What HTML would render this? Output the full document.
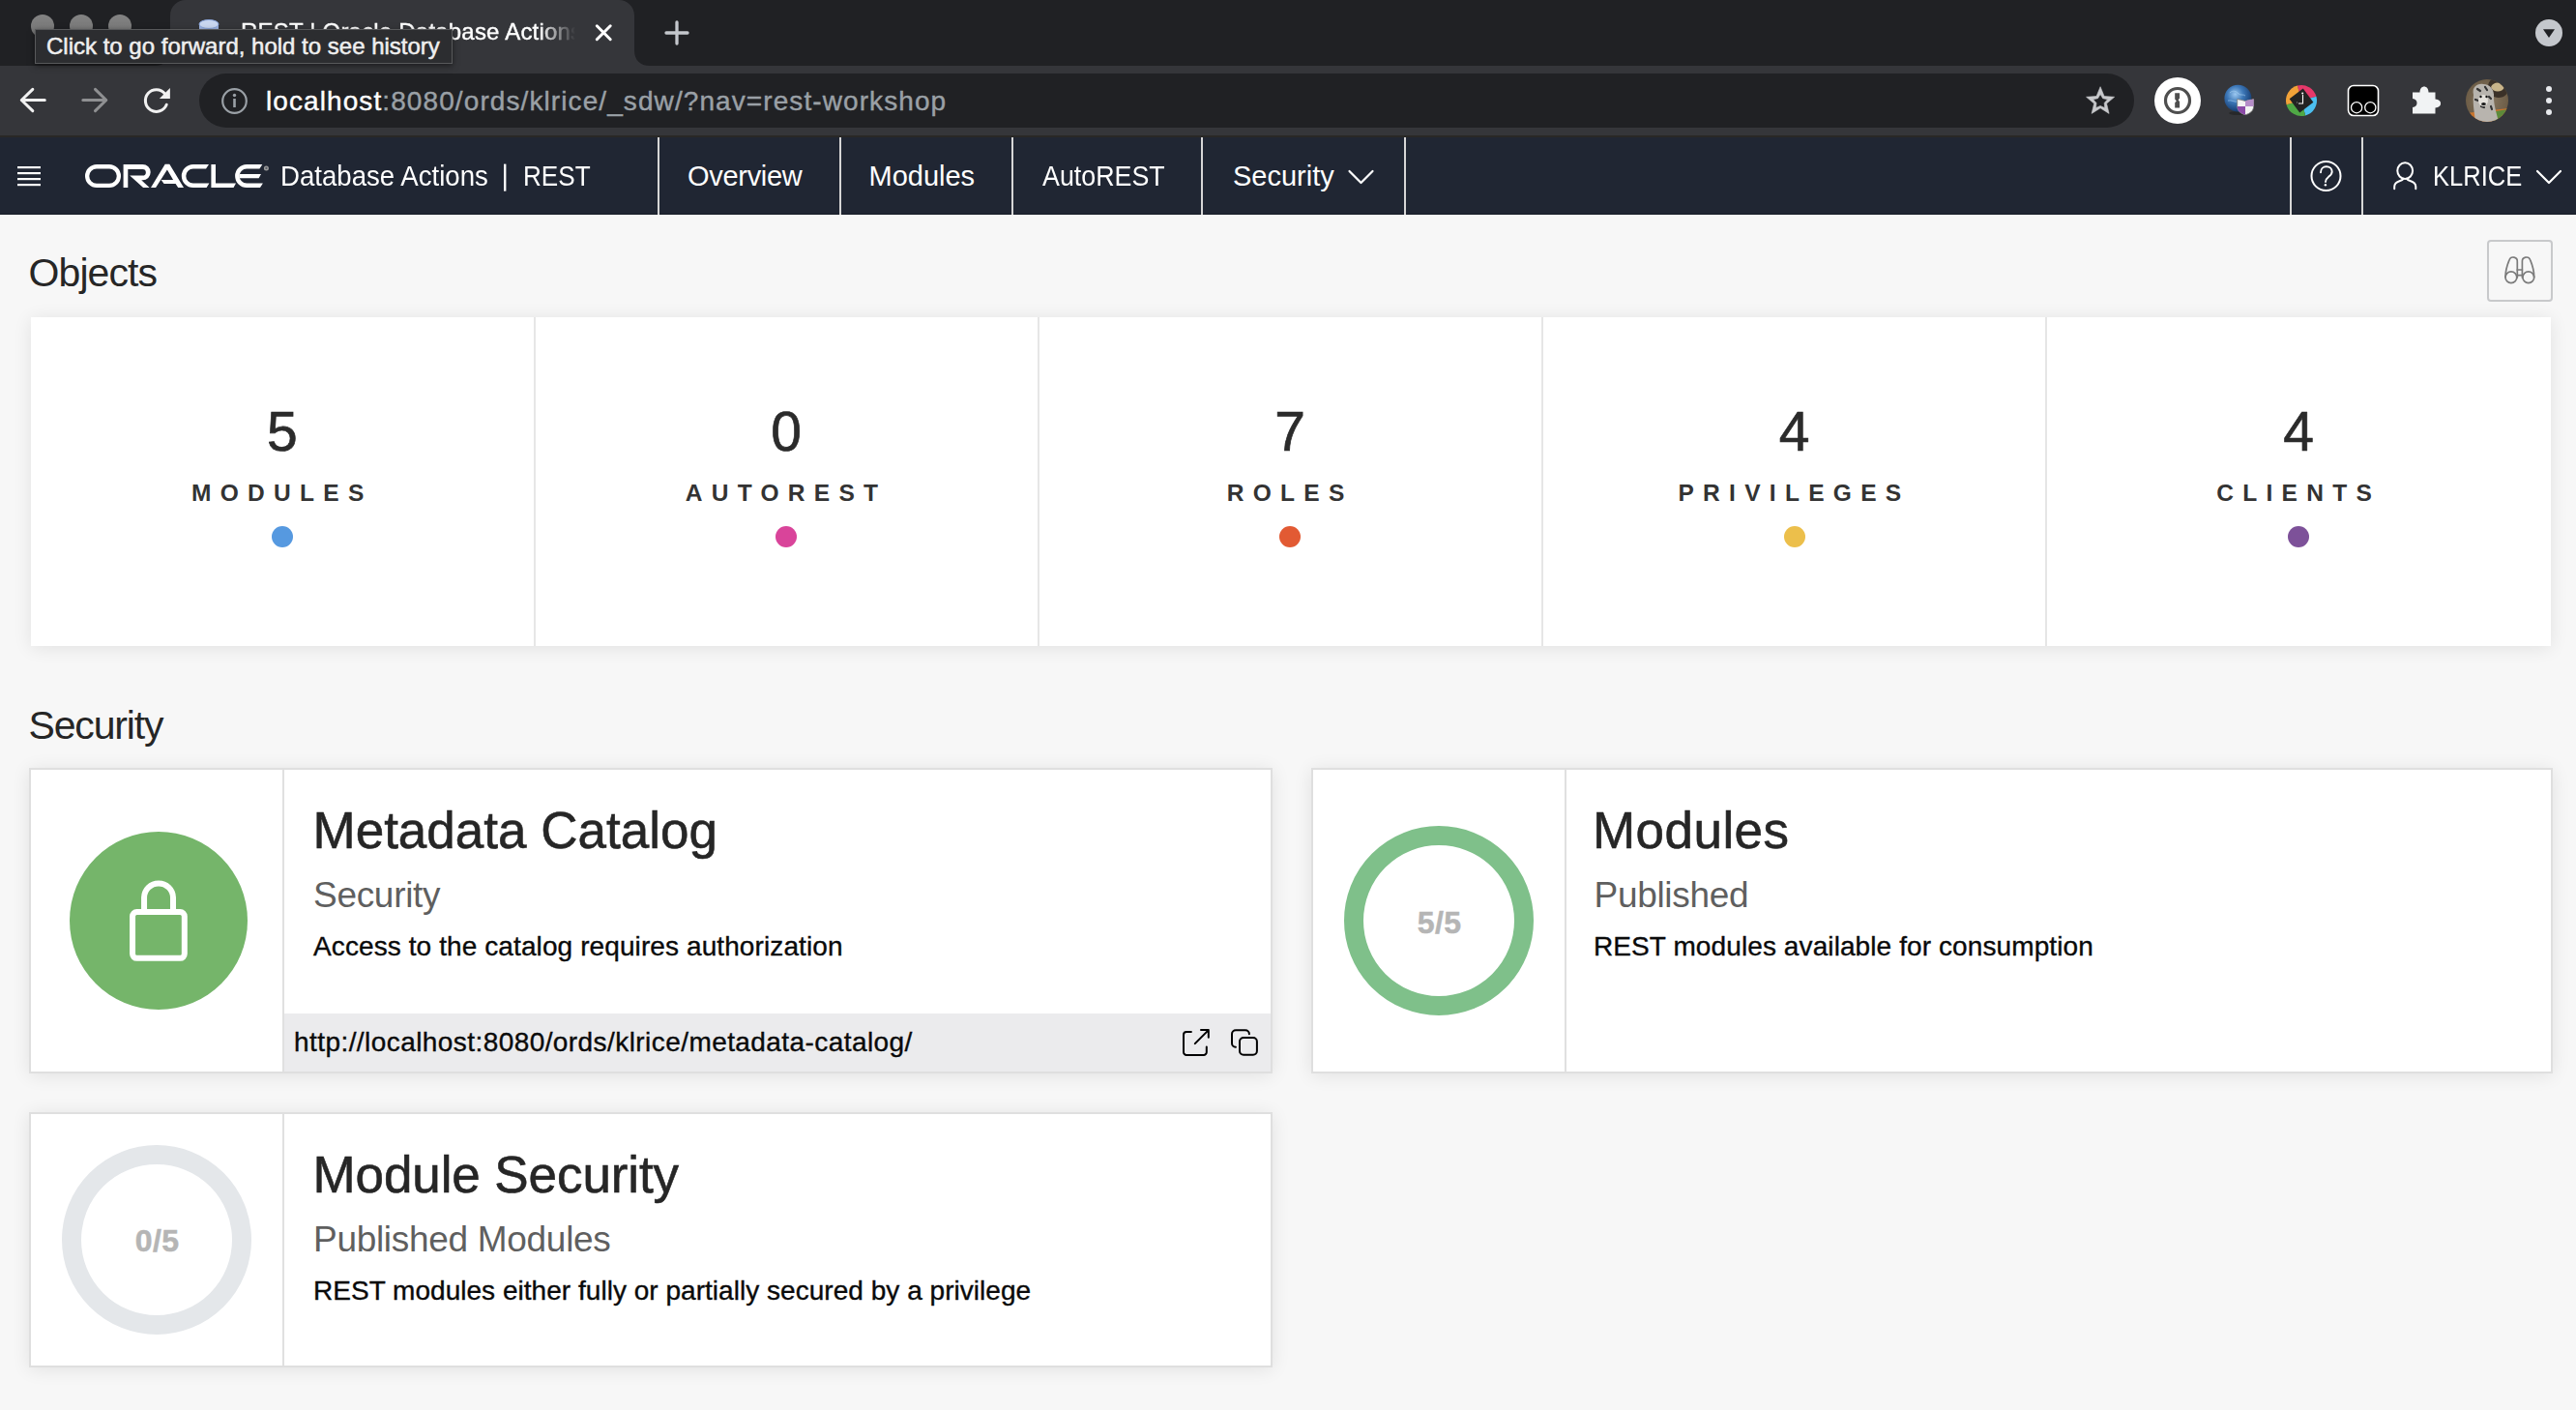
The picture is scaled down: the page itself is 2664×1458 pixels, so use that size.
<!DOCTYPE html>
<html>
<head>
<meta charset="utf-8">
<style>
*{box-sizing:border-box;margin:0;padding:0}
html,body{width:2664px;height:1458px;overflow:hidden;background:#f7f7f7;font-family:"Liberation Sans",sans-serif}
.a{position:absolute}
.t{position:absolute;white-space:nowrap;line-height:1}
#tabstrip{left:0;top:0;width:2664px;height:68px;background:#202124}
#toolbar{left:0;top:68px;width:2664px;height:74px;background:#35363a;border-bottom:2px solid #292826}
#hdr{left:0;top:142px;width:2664px;height:80px;background:#202633;border-bottom:1px solid #181d27}
.light{width:24px;height:24px;border-radius:50%;background:linear-gradient(#838383,#737373);top:14.8px}
.sep{position:absolute;top:142px;width:2px;height:80px;background:#d6d6d6}
.card{position:absolute;background:#fff;border:2px solid #dfdfdf;box-shadow:0 2px 18px rgba(0,0,0,.09)}
.num{top:418.3px;width:400px;text-align:center;font-size:57px;color:#2b2b2b;-webkit-text-stroke:.7px #2b2b2b}
.lbl{top:498px;width:400px;text-align:center;font-size:24.5px;font-weight:700;letter-spacing:9.3px;color:#333}
.dot{top:543.8px;width:22px;height:22px;border-radius:50%}
.ttl{font-size:53px;font-weight:400;-webkit-text-stroke:.6px #262626;letter-spacing:0;color:#262626}
.sub{font-size:37px;color:#5f5f5f;letter-spacing:-.3px}
.dsc{font-size:28px;color:#0a0a0a;letter-spacing:.1px;-webkit-text-stroke:.35px #0a0a0a}
.ring{width:196px;height:196px;border-radius:50%;border:20px solid #7fc08a}
.rt{width:100px;text-align:center;font-size:32px;font-weight:700;color:#b5b5b5;-webkit-text-stroke:.5px #b5b5b5;letter-spacing:.4px;text-indent:.4px}
.hd{top:167.6px;font-size:29px;color:#fff}
</style>
</head>
<body>
<!-- TAB STRIP -->
<div id="tabstrip" class="a"></div>
<div class="a light" style="left:32px"></div>
<div class="a light" style="left:72px"></div>
<div class="a light" style="left:112px"></div>
<svg class="a" style="left:0;top:0" width="2664" height="142" viewBox="0 0 2664 142">
  <path d="M160,68 C170,68 176,62 176,52 L176,16 C176,7 183,0 192,0 L640,0 C649,0 656,7 656,16 L656,52 C656,62 662,68 672,68 Z" fill="#35363a"/>
</svg>
<div class="t" id="tabtitle" style="left:249px;top:21.3px;font-size:24px;color:#fff;-webkit-text-stroke:.4px #fff;width:355px;overflow:hidden;-webkit-mask-image:linear-gradient(to right,#000 0,#000 308px,transparent 346px);letter-spacing:.2px">REST | Oracle Database Actions</div>
<svg class="a" style="left:0;top:0" width="2664" height="142" viewBox="0 0 2664 142">
  <!-- favicon -->
  <path d="M206,25 L206,41 C206,45 211,47 216,47 C221,47 226,45 226,41 L226,25 Z" fill="#9fb6e4"/>
  <ellipse cx="216" cy="25" rx="10" ry="4.5" fill="#c9d7f0" stroke="#8aa6dc" stroke-width="1"/>
  <!-- close x -->
  <path d="M617.3,26.8 L631.2,40.7 M631.2,26.8 L617.3,40.7" stroke="#ffffff" stroke-width="3" stroke-linecap="round"/>
  <!-- plus -->
  <path d="M700,23 L700,45 M689,34 L711,34" stroke="#c4c7cc" stroke-width="3.3" stroke-linecap="round"/>
  <!-- tab search -->
  <circle cx="2636" cy="34" r="14" fill="#c4c7cc"/>
  <path d="M2630,30.2 L2642,30.2 L2636,39 Z" fill="#202124"/>
</svg>

<!-- TOOLBAR -->
<div id="toolbar" class="a"></div>
<div class="a" style="left:206px;top:76px;width:2001px;height:56px;border-radius:28px;background:#202124"></div>
<div class="t" style="left:275px;top:90.6px;font-size:28px;letter-spacing:1.09px;color:#9aa0a6;-webkit-text-stroke:.4px #9aa0a6"><span style="color:#fff;-webkit-text-stroke:.4px #fff">localhost</span>:8080/ords/klrice/_sdw/?nav=rest-workshop</div>
<svg class="a" style="left:0;top:0" width="2664" height="142" viewBox="0 0 2664 142">
  <!-- back -->
  <path d="M22.3,103.5 L46.3,103.5 M33.8,92.4 L22.3,103.5 L33.8,114.6" fill="none" stroke="#f1f1f1" stroke-width="3" stroke-linecap="round" stroke-linejoin="round"/>
  <!-- forward -->
  <path d="M85.8,103.5 L109.8,103.5 M98.5,92.4 L109.8,103.5 L98.5,114.6" fill="none" stroke="#8f9092" stroke-width="3" stroke-linecap="round" stroke-linejoin="round"/>
  <!-- reload -->
  <path d="M172.2,108.2 A11.3,11.3 0 1 1 170.5,97" fill="none" stroke="#f1f1f1" stroke-width="3" stroke-linecap="round"/>
  <path d="M175.9,90.9 L175.9,101.9 L164.9,101.9 Z" fill="#f1f1f1"/>
  <!-- info -->
  <circle cx="242.5" cy="104.5" r="12.3" fill="none" stroke="#9aa0a6" stroke-width="2.2"/>
  <circle cx="242.5" cy="98.5" r="1.7" fill="#9aa0a6"/>
  <rect x="241.2" y="102" width="2.6" height="9" fill="#9aa0a6"/>
  <!-- star -->
  <path d="M2172.10,89.70 L2176.10,99.50 L2186.65,100.27 L2178.57,107.10 L2181.09,117.38 L2172.10,111.80 L2163.11,117.38 L2165.63,107.10 L2157.55,100.27 L2168.10,99.50 Z M2172.10,97.40 L2174.63,101.72 L2179.52,102.79 L2176.19,106.53 L2176.68,111.51 L2172.10,109.50 L2167.52,111.51 L2168.01,106.53 L2164.68,102.79 L2169.57,101.72 Z" fill="#c8c9cc" fill-rule="evenodd" stroke="#c8c9cc" stroke-width=".6" stroke-linejoin="round"/>
  <!-- 1password -->
  <circle cx="2252" cy="104" r="24" fill="#ffffff"/>
  <circle cx="2252" cy="104" r="12.5" fill="none" stroke="#4e4e4e" stroke-width="3.2"/>
  <path d="M2249.2,96.3 L2254.1,96.3 L2254.1,101.6 L2252.7,103.3 L2254.1,105.2 L2254.1,111.5 L2249.2,111.5 L2249.2,106.2 L2250.8,104.4 L2249.2,102.6 Z" fill="#4e4e4e"/>
  <!-- globe -->
  <defs>
    <radialGradient id="gl" cx="0.4" cy="0.35" r="0.75"><stop offset="0" stop-color="#9cc8f0"/><stop offset="0.4" stop-color="#3d78b8"/><stop offset="0.85" stop-color="#163d72"/><stop offset="1" stop-color="#0b2247"/></radialGradient>
    <radialGradient id="av" cx="0.5" cy="0.5" r="0.55"><stop offset="0" stop-color="#8a7a64"/><stop offset="1" stop-color="#6a5a44"/></radialGradient>
    <clipPath id="avc"><circle cx="2572" cy="104" r="22"/></clipPath>
  </defs>
  <ellipse cx="2315" cy="117" rx="10" ry="2" fill="#1a1a1a" opacity=".5"/>
  <circle cx="2314.4" cy="101.7" r="14" fill="url(#gl)"/>
  <path d="M2306,96 C2309,93 2313,94 2315,97 C2317,99 2320,97 2322,99 M2304,104 C2308,103 2311,106 2314,105" fill="none" stroke="#a9d0f2" stroke-width="1" opacity=".6"/>
  <path d="M2322,104.5 C2325,103.5 2328,103 2330.6,102.5 L2330.6,110 C2330.6,114.5 2327,117.5 2322,118.7 C2317,117.5 2313.7,114.5 2313.7,110 L2313.7,102.5 C2316.3,103 2319,103.5 2322,104.5 Z" fill="#f2f2f2" stroke="#777" stroke-width=".8"/>
  <path d="M2322,104.5 C2325,103.5 2328,103 2330.6,102.5 L2330.6,110 L2322,110 Z" fill="#b58dc8"/>
  <path d="M2322,110 L2313.7,110 C2313.7,114.5 2317,117.5 2322,118.7 Z" fill="#8a4aa6"/>
  <!-- colorful -->
  <g transform="translate(2380,104)">
    <path d="M0,-16 A16,16 0 0 1 16,0 L0,0 Z" fill="#e6386a" transform="rotate(-15)"/>
    <path d="M0,-16 A16,16 0 0 1 16,0 L0,0 Z" fill="#4cc0f0" transform="rotate(75)"/>
    <path d="M0,-16 A16,16 0 0 1 16,0 L0,0 Z" fill="#4fa845" transform="rotate(165)"/>
    <path d="M0,-16 A16,16 0 0 1 16,0 L0,0 Z" fill="#f2a238" transform="rotate(255)"/>
    <path d="M0,-12.5 L12.5,0 L0,12.5 L-12.5,0 Z" fill="#232323" transform="rotate(8)"/>
    <path d="M1.5,-6 L1.5,3 L-3,3 M-5,2 L-4.5,2" fill="none" stroke="#fff" stroke-width="1.1"/>
    <circle cx="1.2" cy="-7.5" r="1" fill="#fff"/>
  </g>
  <!-- black square ext -->
  <rect x="2428.5" y="88.5" width="31" height="31" rx="5.5" fill="#000" stroke="#fff" stroke-width="1.6"/>
  <circle cx="2437.1" cy="111.2" r="5.6" fill="none" stroke="#fff" stroke-width="1.3"/>
  <circle cx="2451.3" cy="111.2" r="5.6" fill="none" stroke="#fff" stroke-width="1.3"/>
  <!-- puzzle -->
  <path d="M2495,95.5 L2502.5,95.5 C2502.5,87.5 2511.5,87.5 2511.5,95.5 L2518.5,95.5 L2518.5,102.5 C2526,102.5 2526,111.5 2518.5,111.5 L2518.5,117.5 L2495,117.5 L2495,111 C2501,111 2501,102 2495,102 Z" fill="#f1f3f4"/>
  <!-- avatar -->
  <g clip-path="url(#avc)">
    <rect x="2550" y="82" width="44" height="44" fill="url(#av)"/>
    <circle cx="2584" cy="90" r="11" fill="#3b3128"/>
    <path d="M2576,90 C2578,84 2588,84 2590,90 C2588,96 2578,96 2576,90 Z" fill="#c9b58a"/>
    <path d="M2550,117 L2594,112 L2594,126 L2550,126 Z" fill="#c9752e"/>
    <path d="M2575,116 L2594,113 L2594,126 L2580,126 Z" fill="#5d8a3a"/>
    <path d="M2558,98 C2556,90 2562,86 2568,87 C2575,87 2580,93 2579,101 C2579,108 2581,114 2584,126 L2560,126 C2559,116 2557,108 2558,98 Z" fill="#b8b4ae"/>
    <path d="M2562,92 l3,2 M2570,90 l2,3 M2560,103 l3,1 M2574,100 l2,2 M2566,110 l3,1 M2576,110 l1,3" stroke="#333" stroke-width="2.2" stroke-linecap="round"/>
    <ellipse cx="2568" cy="104" rx="5" ry="6" fill="#e3e0da"/>
    <circle cx="2565.5" cy="100" r="1.2" fill="#111"/><circle cx="2571.5" cy="100" r="1.2" fill="#111"/>
    <ellipse cx="2568.5" cy="107.5" rx="2.4" ry="1.6" fill="#1a1a1a"/>
  </g>
  <!-- menu -->
  <circle cx="2636" cy="92" r="3" fill="#e8eaed"/><circle cx="2636" cy="104" r="3" fill="#e8eaed"/><circle cx="2636" cy="116" r="3" fill="#e8eaed"/>
</svg>

<!-- TOOLTIP -->
<div class="a" style="left:36px;top:30px;width:432px;height:36px;background:#2c2d30;border:1px solid #58595b;box-shadow:0 2px 6px rgba(0,0,0,.5)"></div>
<div class="t" style="left:48px;top:35.8px;font-size:24px;color:#efefef;-webkit-text-stroke:.5px #efefef">Click to go forward, hold to see history</div>

<!-- APP HEADER -->
<div id="hdr" class="a"></div>
<div class="sep" style="left:868px"></div>
<div class="sep" style="left:680px"></div>
<div class="sep" style="left:1046px"></div>
<div class="sep" style="left:1242px"></div>
<div class="sep" style="left:1452px"></div>
<div class="sep" style="left:2368px"></div>
<div class="sep" style="left:2442px"></div>
<svg class="a" style="left:0;top:0" width="2664" height="230" viewBox="0 0 2664 230">
  <!-- hamburger -->
  <rect x="18" y="172" width="24" height="2.2" fill="#fff"/><rect x="18" y="178" width="24" height="2.2" fill="#fff"/>
  <rect x="18" y="184" width="24" height="2.2" fill="#fff"/><rect x="18" y="190" width="24" height="2.2" fill="#fff"/>
  <!-- ORACLE -->
  <g fill="#fff" fill-rule="evenodd">
    <path d="M100.1,169.9 L112.9,169.9 A12.1,12.1 0 0 1 112.9,194.1 L100.1,194.1 A12.1,12.1 0 0 1 100.1,169.9 Z M99.9,174.4 A7.65,7.65 0 0 0 99.9,189.7 L113.1,189.7 A7.65,7.65 0 0 0 113.1,174.4 Z"/>
    <path d="M127.6,169.9 L147.5,169.9 A8.2,8.2 0 0 1 147.5,186.3 L146.2,186.3 L154.6,194.1 L148.1,194.1 L134.2,181.6 L147.5,181.6 A3.35,3.35 0 0 0 147.5,174.9 L132.3,174.9 L132.3,194.1 L127.6,194.1 Z"/>
    <path d="M170.7,169.8 L175.3,169.8 L190,194.1 L184.2,194.1 L181.6,190 L169.6,190 L166.6,185.9 L179.1,185.9 L172.9,175.6 L161.1,194.1 L156,194.1 Z"/>
    <path d="M216,170 L199.8,170 A12,12 0 0 0 199.8,194 L213.6,194 L216.4,189.5 L199.8,189.5 A7.5,7.5 0 0 1 199.8,174.5 L213,174.5 Z"/>
    <path d="M218.4,170 L223,170 L223,189.5 L244,189.5 L241.5,194 L218.4,194 Z"/>
    <path d="M271.3,170 L255.1,170 A12,12 0 0 0 255.1,194 L269,194 L271.9,189.5 L255.1,189.5 A7.5,7.5 0 0 1 255.1,174.5 L268.4,174.5 Z M247.8,179.9 L270,179.9 L267.6,184.2 L247.8,184.2 Z"/>
  </g>
  <circle cx="275.4" cy="173.9" r="2.5" fill="#9c9c9c"/><circle cx="275.4" cy="173.9" r="1.1" fill="#5a5f68"/>
  <!-- pipe -->
  <rect x="521" y="169.6" width="2.4" height="28" fill="#fff"/>
  <!-- security chevron -->
  <path d="M1395.5,177 L1407.5,189 L1419.5,177" fill="none" stroke="#fff" stroke-width="2.2" stroke-linecap="round" stroke-linejoin="round"/>
  <!-- help -->
  <circle cx="2405.5" cy="182" r="15" fill="none" stroke="#fff" stroke-width="2"/>
  <path d="M2400,178.2 C2400,174.6 2402.6,172.3 2405.8,172.3 C2409.2,172.3 2411.7,174.5 2411.7,177.6 C2411.7,180.4 2409.6,181.7 2408,182.9 C2406.2,184.3 2405,185.4 2405,188" fill="none" stroke="#fff" stroke-width="1.9" stroke-linecap="round"/>
  <circle cx="2404.9" cy="191.3" r="1.2" fill="#fff"/>
  <!-- user -->
  <ellipse cx="2487.2" cy="176.6" rx="7.9" ry="8.3" fill="none" stroke="#fff" stroke-width="2"/>
  <path d="M2476.2,195.2 L2476.2,193 C2476.2,189.5 2479,188 2482,187 C2484.5,186.2 2485,185.5 2485.5,184.8 M2489,184.8 C2489.5,185.5 2490,186.2 2492.5,187 C2495.5,188 2498.3,189.5 2498.3,193 L2498.3,195.2" fill="none" stroke="#fff" stroke-width="2" stroke-linecap="round"/>
  <!-- user chevron -->
  <path d="M2624,177 L2636,189 L2648,177" fill="none" stroke="#fff" stroke-width="2.2" stroke-linecap="round" stroke-linejoin="round"/>
</svg>
<div class="t hd" style="left:290px;transform:scaleX(.952);transform-origin:0 0">Database Actions</div>
<div class="t hd" style="left:541px;transform:scaleX(.9);transform-origin:0 0">REST</div>
<div class="t hd" style="left:711px;letter-spacing:-.3px">Overview</div>
<div class="t hd" style="left:898.5px">Modules</div>
<div class="t hd" style="left:1078px;transform:scaleX(.925);transform-origin:0 0">AutoREST</div>
<div class="t hd" style="left:1275px">Security</div>
<div class="t hd" style="left:2515.5px;transform:scaleX(.88);transform-origin:0 0">KLRICE</div>

<!-- OBJECTS -->
<div class="t" style="left:29.5px;top:262px;font-size:41px;letter-spacing:-.9px;color:#262626">Objects</div>
<div class="a" style="left:2572px;top:248px;width:68px;height:64px;border:2px solid #c8c9cb;border-radius:4px"></div>
<svg class="a" style="left:2572px;top:248px" width="68" height="64" viewBox="2572 248 68 64">
  <g fill="none" stroke="#7b7b7b" stroke-width="1.7" stroke-linecap="round">
    <circle cx="2596.9" cy="286.8" r="5.9"/>
    <circle cx="2614.8" cy="286.8" r="5.9"/>
    <path d="M2591,286.5 C2591,280 2592.6,274.5 2595,268.8 A4.3,4.3 0 0 1 2603.3,270.7 L2603.3,287"/>
    <path d="M2620.7,286.5 C2620.7,280 2619.1,274.5 2616.7,268.8 A4.3,4.3 0 0 0 2608.4,270.7 L2608.4,287"/>
    <path d="M2603.3,279 L2608.4,279 M2603.3,284.6 L2608.4,284.6"/>
  </g>
</svg>
<div class="card" style="left:32px;top:328px;width:2606px;height:340px;border:none"></div>

<div class="t num" style="left:91.8px">5</div>
<div class="t lbl" style="left:91.8px">MODULES</div>
<div class="a dot" style="left:280.8px;background:#5699e0"></div>
<div class="t num" style="left:613.0px">0</div>
<div class="t lbl" style="left:613.0px">AUTOREST</div>
<div class="a dot" style="left:802.0px;background:#d9449a"></div>
<div class="t num" style="left:1134.2px">7</div>
<div class="t lbl" style="left:1134.2px">ROLES</div>
<div class="a dot" style="left:1323.2px;background:#e25a33"></div>
<div class="t num" style="left:1655.5px">4</div>
<div class="t lbl" style="left:1655.5px">PRIVILEGES</div>
<div class="a dot" style="left:1844.5px;background:#ecbf4b"></div>
<div class="t num" style="left:2177.2px">4</div>
<div class="t lbl" style="left:2177.2px">CLIENTS</div>
<div class="a dot" style="left:2366.2px;background:#7d5199"></div>
<div class="a" style="left:551.6px;top:328px;width:2px;height:340px;background:#e6e6e6"></div>
<div class="a" style="left:1073.0px;top:328px;width:2px;height:340px;background:#e6e6e6"></div>
<div class="a" style="left:1594.3px;top:328px;width:2px;height:340px;background:#e6e6e6"></div>
<div class="a" style="left:2114.5px;top:328px;width:2px;height:340px;background:#e6e6e6"></div>

<!-- SECURITY -->
<div class="t" style="left:29.5px;top:730px;font-size:41px;letter-spacing:-1.15px;color:#262626">Security</div>

<!-- card 1 -->
<div class="card" style="left:30px;top:794px;width:1286px;height:316px"></div>
<div class="a" style="left:292px;top:796px;width:2px;height:312px;background:#e0e0e0"></div>
<div class="a" style="left:294px;top:1048px;width:1020px;height:60px;background:#ebebed"></div>
<div class="a" style="left:71.7px;top:859.7px;width:184px;height:184px;border-radius:50%;background:#75b56a"></div>
<svg class="a" style="left:120px;top:895px" width="90" height="110" viewBox="120 895 90 110">
  <g fill="none" stroke="#fff" stroke-width="6">
    <rect x="137.05" y="943" width="53.75" height="47.85" rx="4.5"/>
    <path d="M149.05,940 L149.05,928 A14.98,14.98 0 0 1 179,928 L179,940"/>
  </g>
</svg>
<svg class="a" style="left:1210px;top:1055px" width="100" height="45" viewBox="1210 1055 100 45">
  <g fill="none" stroke="#000" stroke-width="2" stroke-linecap="round" stroke-linejoin="round">
    <path d="M1231.9,1067.1 L1227,1067.1 A3,3 0 0 0 1224,1070.1 L1224,1087.9 A3,3 0 0 0 1227,1090.9 L1244.8,1090.9 A3,3 0 0 0 1247.8,1087.9 L1247.8,1082.4"/>
    <path d="M1235.8,1079.1 L1249.8,1065.1 M1242,1065.1 L1249.8,1065.1 L1249.8,1072.7"/>
    <path d="M1277.9,1082.8 A4,4 0 0 1 1274,1078.8 L1274,1069.2 A4,4 0 0 1 1278,1065.2 L1287.9,1065.2 A4,4 0 0 1 1291.9,1069.2"/>
    <rect x="1282" y="1073" width="17.9" height="17.7" rx="4"/>
  </g>
</svg>
<div class="t ttl" style="left:323.5px;top:832px">Metadata Catalog</div>
<div class="t sub" style="left:324px;top:907px">Security</div>
<div class="t dsc" style="left:324px;top:965px">Access to the catalog requires authorization</div>
<div class="t" style="left:304px;top:1064.3px;font-size:28px;letter-spacing:.43px;color:#0a0a0a;-webkit-text-stroke:.35px #0a0a0a">http://localhost:8080/ords/klrice/metadata-catalog/</div>

<!-- card 2 -->
<div class="card" style="left:1356px;top:794px;width:1284px;height:316px"></div>
<div class="a" style="left:1618px;top:796px;width:2px;height:312px;background:#e0e0e0"></div>
<div class="a ring" style="left:1390px;top:854px;border-color:#7fc08a"></div>
<div class="t rt" style="left:1438.5px;top:937.5px">5/5</div>
<div class="t ttl" style="left:1647px;top:832px;letter-spacing:.45px">Modules</div>
<div class="t sub" style="left:1648.5px;top:907px">Published</div>
<div class="t dsc" style="left:1648px;top:965px">REST modules available for consumption</div>

<!-- card 3 -->
<div class="card" style="left:30px;top:1150px;width:1286px;height:264px"></div>
<div class="a" style="left:292px;top:1152px;width:2px;height:260px;background:#e0e0e0"></div>
<div class="a ring" style="left:64px;top:1184px;border-color:#e4e7ea"></div>
<div class="t rt" style="left:112.5px;top:1266.5px">0/5</div>
<div class="t ttl" style="left:323.5px;top:1188px;letter-spacing:-.1px">Module Security</div>
<div class="t sub" style="left:324px;top:1263px">Published Modules</div>
<div class="t dsc" style="left:324px;top:1321px;letter-spacing:.03px">REST modules either fully or partially secured by a privilege</div>
</body>
</html>
